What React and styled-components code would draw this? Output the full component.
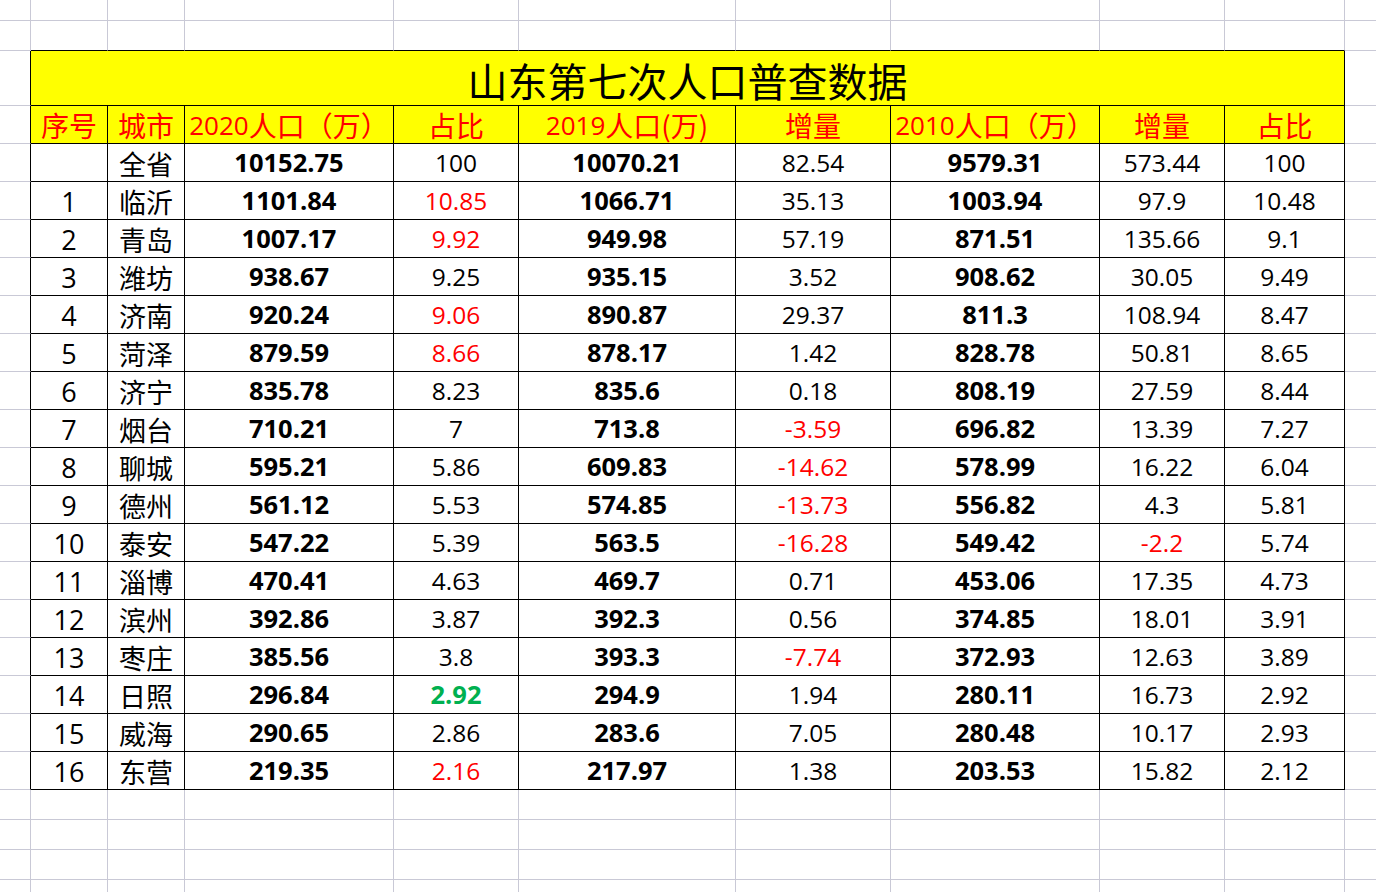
import React from 'react'
import styled, { createGlobalStyle } from 'styled-components'

const GlobalStyle = createGlobalStyle`
  html, body {
    margin: 0;
    padding: 0;
    background: #ffffff;
    overflow: hidden;
  }
  body {
    font-family: "Open Sans", "Noto Sans CJK SC", sans-serif;
  }
`

const GRID = '#c9c9d6'
const INK = '#000000'
const RED = '#ff0000'
const GREEN = '#00b050'

// sheet geometry (each track includes its right / bottom grid line)
const COLS = [31, 77, 77, 209, 125, 217, 155, 209, 125, 120, 40]
const TOP_ROWS = [21, 30]
const BOTTOM_ROWS = [30, 30, 30, 40]
const ROW_H = 38

const Sheet = styled.div`
  display: grid;
  grid-template-columns: ${COLS.map((w) => w + 'px').join(' ')};
  grid-template-rows: ${TOP_ROWS.map((h) => h + 'px').join(' ')} 55px repeat(18, ${ROW_H}px) ${BOTTOM_ROWS.map((h) => h + 'px').join(' ')};
  width: 1376px;
  height: 892px;
  overflow: hidden;
`

const Cell = styled.div`
  box-sizing: border-box;
  border-right: 1px solid ${({ $right }) => ($right ? INK : GRID)};
  border-bottom: 1px solid ${({ $bottom }) => ($bottom ? INK : GRID)};
`

const TableCell = styled.div`
  box-sizing: border-box;
  border-right: 1px solid ${INK};
  border-bottom: 1px solid ${INK};
  background: ${({ $head }) => ($head ? '#ffff00' : '#ffffff')};
  display: flex;
  align-items: center;
  justify-content: center;
  white-space: nowrap;
  font-size: ${({ $size }) => $size || 24.5}px;
  line-height: 1;
  font-weight: ${({ $bold }) => ($bold ? 700 : 400)};
  color: ${({ $color }) => $color || INK};
  padding-top: 1px;
`

const TitleCell = styled(TableCell)`
  grid-column: 2 / span 9;
  font-family: "Noto Sans CJK SC", sans-serif;
  font-size: 40px;
  padding-top: 4px;
`

const Han = styled.span`
  font-family: "Noto Sans CJK SC", sans-serif;
  font-size: ${({ $size }) => $size || 27}px;
`

const headers = [
  [<Han key="a" $size={28}>序号</Han>],
  [<Han key="a" $size={28}>城市</Han>],
  ['2020', <Han key="a" $size={28}>人口（万）</Han>],
  [<Han key="a" $size={28}>占比</Han>],
  ['2019', <Han key="a" $size={28}>人口(万)</Han>],
  [<Han key="a" $size={28}>增量</Han>],
  ['2010', <Han key="a" $size={28}>人口（万）</Han>],
  [<Han key="a" $size={28}>增量</Han>],
  [<Han key="a" $size={28}>占比</Han>],
]

// [no, city, pop2020, share, pop2019, delta, pop2010, delta2010, share2010]
// r = red, g = green bold
const rows = [
  ['', '全省', '10152.75', '100', '10070.21', '82.54', '9579.31', '573.44', '100'],
  ['1', '临沂', '1101.84', '10.85:r', '1066.71', '35.13', '1003.94', '97.9', '10.48'],
  ['2', '青岛', '1007.17', '9.92:r', '949.98', '57.19', '871.51', '135.66', '9.1'],
  ['3', '潍坊', '938.67', '9.25', '935.15', '3.52', '908.62', '30.05', '9.49'],
  ['4', '济南', '920.24', '9.06:r', '890.87', '29.37', '811.3', '108.94', '8.47'],
  ['5', '菏泽', '879.59', '8.66:r', '878.17', '1.42', '828.78', '50.81', '8.65'],
  ['6', '济宁', '835.78', '8.23', '835.6', '0.18', '808.19', '27.59', '8.44'],
  ['7', '烟台', '710.21', '7', '713.8', '-3.59:r', '696.82', '13.39', '7.27'],
  ['8', '聊城', '595.21', '5.86', '609.83', '-14.62:r', '578.99', '16.22', '6.04'],
  ['9', '德州', '561.12', '5.53', '574.85', '-13.73:r', '556.82', '4.3', '5.81'],
  ['10', '泰安', '547.22', '5.39', '563.5', '-16.28:r', '549.42', '-2.2:r', '5.74'],
  ['11', '淄博', '470.41', '4.63', '469.7', '0.71', '453.06', '17.35', '4.73'],
  ['12', '滨州', '392.86', '3.87', '392.3', '0.56', '374.85', '18.01', '3.91'],
  ['13', '枣庄', '385.56', '3.8', '393.3', '-7.74:r', '372.93', '12.63', '3.89'],
  ['14', '日照', '296.84', '2.92:g', '294.9', '1.94', '280.11', '16.73', '2.92'],
  ['15', '威海', '290.65', '2.86', '283.6', '7.05', '280.48', '10.17', '2.93'],
  ['16', '东营', '219.35', '2.16:r', '217.97', '1.38', '203.53', '15.82', '2.12'],
]

const boldCols = [2, 4, 6]

function renderValue(raw, col) {
  const [text, flag] = raw.split(':')
  const bold = boldCols.includes(col) || flag === 'g'
  const props = {
    $bold: bold,
    $size: col === 0 ? 27 : bold ? 25.5 : 24.5,
    $color: flag === 'r' ? RED : flag === 'g' ? GREEN : undefined,
  }
  return { text: col === 1 ? <Han>{text}</Han> : text, props }
}

function blankRow(key, bottomBlack) {
  return COLS.map((_, c) => (
    <Cell key={`${key}-${c}`} $bottom={bottomBlack && c >= 1 && c <= 9} />
  ))
}

export default function App() {
  return (
    <>
      <GlobalStyle />
      <Sheet>
        {blankRow('t0', false)}
        {blankRow('t1', true)}

        {/* title row */}
        <Cell $right />
        <TitleCell $head>山东第七次人口普查数据</TitleCell>
        <Cell />

        {/* header row */}
        <Cell $right />
        {headers.map((h, i) => (
          <TableCell key={`h-${i}`} $head $color={RED} $size={26}>
            {h}
          </TableCell>
        ))}
        <Cell />

        {rows.map((row, r) => (
          <React.Fragment key={`r-${r}`}>
            <Cell $right />
            {row.map((raw, c) => {
              const { text, props } = renderValue(raw, c)
              return (
                <TableCell key={`c-${r}-${c}`} {...props}>
                  {text}
                </TableCell>
              )
            })}
            <Cell />
          </React.Fragment>
        ))}

        {BOTTOM_ROWS.map((_, i) => blankRow(`b${i}`, false))}
      </Sheet>
    </>
  )
}
